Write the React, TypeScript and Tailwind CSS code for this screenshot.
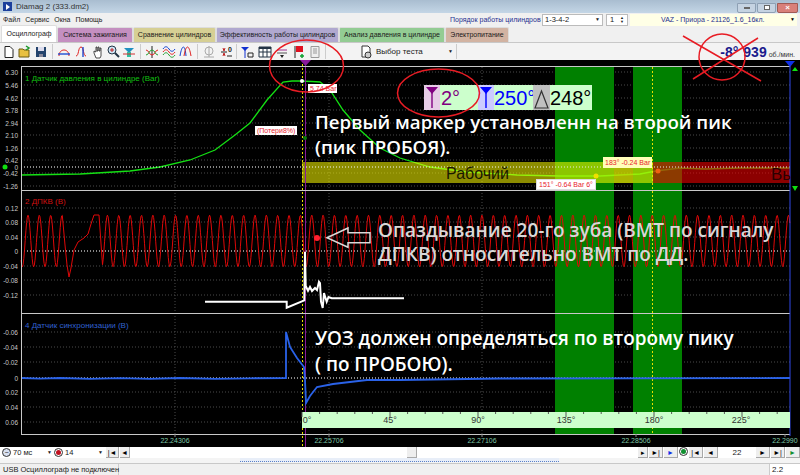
import { ReactNode } from "react";

const tabs = [
  { label: "Осциллограф", w: "w-[56px]", cls: "bg-white h-[17px] -mt-[1px]" },
  { label: "Система зажигания", w: "w-[76px]", cls: "bg-[#c48fc0]" },
  { label: "Сравнение цилиндров", w: "w-[83px]", cls: "bg-[#d6cf94]" },
  { label: "Эффективность работы цилиндров", w: "w-[123px]", cls: "bg-[#b0a8cf]" },
  { label: "Анализ давления в цилиндре", w: "w-[106px]", cls: "bg-[#93cc93]" },
  { label: "Электропитание", w: "w-[64px]", cls: "bg-[#d2b3a2]" },
];

function wave() {
  const pts: string[] = [];
  const zero = 241;
  const amp = 25.8;
  const curve = (from: number, to: number) => {
    for (let x = from; x <= to; x += 0.7) {
      const y = zero - amp * Math.cos(((x - 28) / 11.35) * Math.PI * 2);
      pts.push(`${x.toFixed(1)},${y.toFixed(1)}`);
    }
  };
  curve(21, 63);
  pts.push("65,245", "67,265", "69,277", "71,268", "74,250", "78,242", "84,238", "88,234", "91,224", "94,215", "99,215");
  curve(102.5, 790);
  return pts.join(" ");
}

const pressure =
  "21,175 80,174 130,171 160,167 190,160 215,150 235,135 250,123 267,100 283,82 292,81 300,81 312,81.5 320,82 330,90 343,110 360,130 380,148 400,158 430,167 467,172 517,175 560,176 600,176 640,174 656,171 680,168 705,169 740,168 790,168";
const sync =
  "21,378 40,378.6 60,378 90,378.8 120,378.2 150,378.8 180,378 215,378.8 250,378.3 286,378 286,332 290,347 297,358 304,367 305,380 306,403 310,396 317,387 333,384 367,380 400,380 500,378.5 790,378";
const drawn =
  "205,301.7 286.7,301.7 286.7,307.7 304.3,300.3 305,251.7 305.7,286 308,290.7 310,287 312,291 315,288 317,290 319,281.7 320,283 321,301.7 322.7,308 324,293 326.7,301.7 328.5,297 331.7,298.3 404,298.3";

const yLabels: [string, number][] = [
  ["6.30", 72], ["5.46", 85], ["4.62", 98], ["3.78", 110], ["2.94", 123], ["2.10", 135], ["1.26", 148], ["0.42", 160],
  ["0", 167], ["-0.42", 173], ["-1.26", 186],
  ["0.12", 208], ["0.08", 222], ["0.04", 237], ["0", 251], ["-0.04", 266], ["-0.08", 280], ["-0.12", 295],
  ["-0.06", 332], ["-0.04", 347], ["-0.02", 362], ["0", 378], ["0.02", 392], ["0.04", 407], ["0.06", 422],
];

const timeLabels: [string, number][] = [
  ["22.24306", 175], ["22.25706", 329], ["22.27106", 482], ["22.28506", 636], ["22.2990", 785],
];

const degrees: [string, number][] = [
  ["0°", 307], ["45°", 390], ["90°", 478], ["135°", 566], ["180°", 654], ["225°", 741],
];

function Icon({ x = 0, children }: { x?: number; children: ReactNode }) {
  return (
    <svg width="14" height="14" viewBox="0 0 14 14" fill="none" className="shrink-0" style={x ? { marginLeft: x } : undefined}>
      {children}
    </svg>
  );
}

function Bubble({ text, className }: { text: string; className: string }) {
  return (
    <div className={`absolute bg-white text-[7px] leading-[9px] text-[#e8212c] px-[2px] whitespace-nowrap ${className}`}>{text}</div>
  );
}

function NavBtn({ children, w = "w-[14px]" }: { children: ReactNode; w?: string }) {
  return (
    <div className={`${w} h-[11px] bg-[#eeeeee] border-b border-r border-[#a8a8a8] flex items-center justify-center text-[7px] leading-none text-black shrink-0`}>
      {children}
    </div>
  );
}

export default function App() {
  return (
    <div className="relative w-[800px] h-[475px] overflow-hidden bg-[#f0f0f0] font-['Liberation_Sans',sans-serif] text-[#1a1a1a]">
      {/* title bar */}
      <div className="h-[13px] bg-gradient-to-b from-[#a9bdd0] to-[#c4d6e6] flex items-center pl-[3px] pr-[2px]">
        <div className="w-[9px] h-[9px] bg-[#1c3f9c] flex items-center justify-center">
          <div className="w-0 h-0 border-y-[3px] border-y-transparent border-l-[4px] border-l-white" />
        </div>
        <span className="ml-[4px] text-[8px] text-[#333]">Diamag 2 (333.dm2)</span>
        <div className="ml-auto flex gap-[1px] -mb-[2px]">
          <div className="w-[19px] h-[10px] rounded-b-[2px] bg-[#c5d3e2] border border-[#8ea0b4] flex items-center justify-center">
            <div className="w-[6px] h-[2px] bg-white border border-[#666]" />
          </div>
          <div className="w-[19px] h-[10px] rounded-b-[2px] bg-[#c5d3e2] border border-[#8ea0b4] flex items-center justify-center">
            <div className="w-[6px] h-[5px] bg-white border border-[#666]" />
          </div>
          <div className="w-[21px] h-[10px] rounded-b-[2px] bg-[#d9807a] border border-[#a05a55] flex items-center justify-center text-white text-[8px] leading-none font-bold">
            ×
          </div>
        </div>
      </div>

      {/* menu */}
      <div className="h-[14px] flex items-center pl-[3px] text-[7px]">
        <div className="w-[447px] flex gap-[5px]">
          <span>Файл</span>
          <span>Сервис</span>
          <span>Окна</span>
          <span>Помощь</span>
        </div>
        <span className="w-[92px] text-[#1e2f8f] whitespace-nowrap">Порядок работы цилиндров</span>
        <div className="w-[61px] h-[12px] bg-white border border-[#bbb] flex items-center px-[2px] text-[7.5px]">
          1-3-4-2<span className="ml-auto text-[5px]">▼</span>
        </div>
        <div className="ml-[3px] w-[22px] h-[12px] bg-white border border-[#bbb] flex items-center px-[3px] text-[7.5px]">
          1<span className="ml-auto text-[4px] leading-[4px]">▲<br />▼</span>
        </div>
        <div className="ml-[2px] w-[167px] h-[12px] bg-[#ffffe6] flex items-center pl-[31px] pr-[2px] text-[#1e2f8f] whitespace-nowrap">
          VAZ - Приора - 21126_1.6_16кл.<span className="ml-auto text-[5px] text-black">▼</span>
        </div>
      </div>

      {/* tabs */}
      <div className="h-[16px] flex items-end pl-[1px] border-b border-[#c8c8c8] text-[7px]">
        {tabs.map((t) => (
          <div key={t.label} className={`${t.w} h-[15px] ${t.cls} rounded-t-[2px] border border-b-0 border-[#ddd] flex items-center justify-center whitespace-nowrap shrink-0`}>
            {t.label}
          </div>
        ))}
      </div>

      {/* toolbar */}
      <div className="h-[17px] bg-[#f3f3f3] flex items-center pl-[2px]">
        <Icon><path d="M3 1.5h5l3 3v8H3z" fill="#fff" stroke="#222" /></Icon>
        <Icon x={2}><path d="M1 4h4l1 1h5v7H1z" fill="#e8c040" stroke="#6a5a10" /><path d="M8 1l3 2-3 2" stroke="#1a9a2a" strokeWidth="1.5" /></Icon>
        <Icon x={2}><path d="M2 2h10v10H2z" fill="#24446c" /><path d="M4 2h6v4H4z" fill="#dde" /><path d="M5 9h4v3H5z" fill="#889" /></Icon>
        <div className="w-[1px] h-[15px] bg-[#ccc] ml-[4px]" />
        <Icon x={4}><path d="M2 11C2 3 12 3 12 11" stroke="#e02020" /><path d="M1 9h12" stroke="#1040d0" strokeWidth="1.3" /></Icon>
        <Icon x={3}><path d="M2 11c3 0 2-9 5-9s2 9 5 9" stroke="#e02020" /><path d="M9 2v10" stroke="#1040d0" strokeWidth="1.3" /></Icon>
        <Icon x={3}><path d="M5 13L3 8V6l2 1V2h1v4h1V2h1v4h1V3h1v8l-1 2z" fill="#fff" stroke="#222" strokeWidth=".8" /></Icon>
        <Icon x={1}><circle cx="6" cy="5" r="4" fill="#cfe6f6" stroke="#234" /><path d="M9 8l4 4" stroke="#234" strokeWidth="2" /><path d="M4 5h4M6 3v4" stroke="#c02020" /></Icon>
        <Icon x={2}><path d="M2 3h10L8 7H6z" fill="#2090c0" /><path d="M5 7h4v5H5z" fill="#30c0a0" /><path d="M1 9h12" stroke="#d03030" /></Icon>
        <div className="w-[1px] h-[15px] bg-[#ccc] ml-[4px]" />
        <Icon x={4}><path d="M7 1v12" stroke="#222" /><path d="M1 5c3 0 3 5 6 5s3-5 6-5" stroke="#e02020" /><path d="M1 10c3 0 3-5 6-5s3 5 6 5" stroke="#20a030" /></Icon>
        <Icon x={3}><path d="M1 4c2-3 4-3 6 0s4 3 6 0" stroke="#1040d0" /><path d="M1 7c2-3 4-3 6 0s4 3 6 0" stroke="#e02020" /><path d="M1 10c2-3 4-3 6 0s4 3 6 0" stroke="#20a030" /></Icon>
        <Icon x={3}><path d="M1 11c2-12 5-12 6 0" stroke="#1040d0" /><path d="M5 11c2-12 5-12 7 0" stroke="#e02020" /></Icon>
        <div className="w-[1px] h-[15px] bg-[#ccc] ml-[4px]" />
        <Icon x={4}><circle cx="7" cy="6" r="4" stroke="#aaa" /><path d="M7 1v11M2 12h10" stroke="#aaa" /></Icon>
        <Icon x={3}><path d="M4 3l1 3 1-3M4 11l1-3 1 3" stroke="#c02020" /><path d="M2 7h6" stroke="#222" /><path d="M8 11h5" stroke="#222" /></Icon>
        <span className="-ml-[5px] mb-[4px] text-[7px] font-bold leading-none">0</span>
        <div className="w-[1px] h-[15px] bg-[#ccc] ml-[4px]" />
        <Icon x={3}><path d="M1 2h8L5 6z" fill="#1030d0" /><path d="M5 5v8" stroke="#1030d0" /><path d="M8 8h5v4H8z" stroke="#222" /></Icon>
        <Icon x={4}><path d="M1 2h12v10H1z" fill="#fff" stroke="#234" /><path d="M1 2h12v2H1z" fill="#234" /><path d="M5 2v10M9 2v10M1 7h12" stroke="#234" /></Icon>
        <Icon x={3}><path d="M2 5h10" stroke="#a03090" /><path d="M2 8h10" stroke="#555" /><path d="M5 10h4l-2 3z" fill="#222" /></Icon>
        <Icon x={3}><path d="M3 1v12" stroke="#222" /><path d="M4 1h7v6H4z" fill="#e01020" /><path d="M10 9v4M8 11h4" stroke="#10a030" strokeWidth="1.5" /></Icon>
        <Icon x={2}><path d="M3 1.5h8v11H3z" fill="#eee" stroke="#999" /><path d="M5 4h4M5 6h4M5 8h4" stroke="#999" /></Icon>
        <div className="w-[1px] h-[15px] bg-[#ccc] ml-[3px]" />
        <Icon x={33}><path d="M3 1h6l2 2v9H3z" fill="#fff" stroke="#333" /><circle cx="9" cy="10" r="3" fill="#ccc" stroke="#333" /></Icon>
        <span className="ml-[3px] text-[8px] w-[77px] whitespace-nowrap flex items-center">
          Выбор теста<span className="ml-auto text-[5px]">▼</span>
        </span>
        <div className="w-[1px] h-[15px] bg-[#ccc] ml-[3px]" />
        <div className="ml-auto pr-[5px] flex items-baseline text-[#1a1a8c] font-bold text-[14px] leading-none">
          <span>-8°</span>
          <span className="ml-[5px]">939</span>
          <span className="ml-[2px] font-normal text-[7px] text-[#333]">об./мин.</span>
        </div>
      </div>

      {/* chart area */}
      <div className="relative h-[387px] bg-black">
        <svg width="800" height="387" viewBox="0 60 800 387" className="block font-['Liberation_Sans',sans-serif]">
          {yLabels.map(([, y], i) => (
            <line key={i} x1="21" x2="790" y1={y} y2={y} stroke="#4a4a4a" strokeDasharray="1 2" />
          ))}
          {timeLabels.slice(0, 4).map(([, x]) => (
            <line key={x} x1={x} x2={x} y1="67" y2="434" stroke="#4a4a4a" strokeDasharray="1 2" />
          ))}
          <rect x="555" y="67" width="59" height="367" fill="#008000" />
          <rect x="633" y="67" width="49" height="367" fill="#008000" />
          <polyline points={pressure} fill="none" stroke="#14e014" strokeWidth="1.3" />
          <rect x="302" y="162" width="351" height="21" fill="#ffff00" fillOpacity=".55" />
          <rect x="614" y="162" width="19" height="21" fill="#c0d000" fillOpacity=".6" />
          <rect x="653" y="162" width="137" height="21" fill="#ff0000" fillOpacity=".55" />
          {[167, 251, 378].map((y) => (
            <line key={y} x1="21" x2="790" y1={y} y2={y} stroke="#e8e8e8" strokeDasharray="1 2" />
          ))}

          <line x1="302.5" x2="302.5" y1="60" y2="447" stroke="#e8e000" strokeDasharray="2 2" />
          <line x1="305.5" x2="305.5" y1="62" y2="447" stroke="#8a1a9a" />
          <line x1="652.5" x2="652.5" y1="67" y2="434" stroke="#e8e000" strokeDasharray="2 2" />

          <polyline points={wave()} fill="none" stroke="#e00808" strokeWidth="1" strokeLinejoin="round" />
          <polyline points={sync} fill="none" stroke="#2a62e8" strokeWidth="1.8" />
          <polyline points={drawn} fill="none" stroke="#ffffff" strokeWidth="2" />

          <polygon points="327,237.7 348,228 348,232.7 370,232.7 370,242.7 348,242.7 348,247.3" fill="none" stroke="#d8d8d8" strokeWidth="1.5" />

          <line x1="21" x2="790" y1="66.5" y2="66.5" stroke="#c8c8c8" />
          <line x1="21" x2="790" y1="190.5" y2="190.5" stroke="#c8c8c8" />
          <line x1="21" x2="790" y1="313.5" y2="313.5" stroke="#c8c8c8" />
          <line x1="21" x2="790" y1="434.5" y2="434.5" stroke="#c8c8c8" />
          <line x1="21.5" x2="21.5" y1="66" y2="435" stroke="#c8c8c8" />
          <line x1="790" x2="790" y1="62" y2="436" stroke="#3048e8" strokeWidth="1" />

          <rect x="302" y="412" width="488" height="16" fill="#ccffcc" />
          {Array.from({ length: 28 }, (_, i) => (
            <line key={i} x1={302 + i * 17.6} x2={302 + i * 17.6} y1="412" y2={i % 5 === 0 ? 417 : 414} stroke="#555" />
          ))}
          {degrees.map(([t, x]) => (
            <text key={t} x={x} y="423" textAnchor="middle" fontSize="9" fill="#333">{t}</text>
          ))}

          {yLabels.map(([t, y], i) => (
            <text key={i} x="18" y={y + 2.5} textAnchor="end" fontSize="6.5" fill="#c8c8c8">{t}</text>
          ))}
          {timeLabels.map(([t, x]) => (
            <g key={x}>
              <line x1={x} x2={x} y1="434" y2="437" stroke="#888" />
              <text x={x} y="443" textAnchor="middle" fontSize="7" fill="#7fc8a8">{t}</text>
            </g>
          ))}
          <text x="25" y="81" fontSize="8" fill="#12c012">1 Датчик давления в цилиндре (Bar)</text>
          <text x="25" y="204" fontSize="8" fill="#d01010">2 ДПКВ (В)</text>
          <text x="25" y="328" fontSize="8" fill="#3060d0">4 Датчик синхронизации (В)</text>
          <text x="446" y="179" fontSize="16" fill="#1a1a00">Рабочий</text>
          <text x="771" y="180" fontSize="17" fill="#2a0000">Вь</text>

          <polygon points="300,60 311,60 305.5,66" fill="#8a1a9a" />
          <polygon points="785,61 795,61 790,67" fill="#1030e8" />
          <polygon points="792,71 798,71 795,67" fill="#10e010" />
          <polygon points="792,186 798,186 795,191" fill="#10e010" />
          <circle cx="5" cy="167" r="2.5" fill="#10e010" />
          <circle cx="302" cy="81" r="2" fill="#ffffff" />
          <circle cx="305" cy="138" r="2" fill="#0a7a0a" />
          <circle cx="317" cy="238" r="3" fill="#ff2030" />
          <circle cx="596" cy="176" r="2.5" fill="#f0e000" />
          <circle cx="658" cy="171" r="2.5" fill="#f06010" />
        </svg>

        <Bubble text="5.74 Bar" className="left-[308px] top-[24px] w-[29px]" />
        <Bubble text="(Потери8%)" className="left-[255px] top-[66px]" />
        <Bubble text="151° -0.64 Bar 6°" className="left-[536px] top-[119px] border border-[#ddd]" />
        <div className="absolute left-[603px] top-[97px] w-[49px] h-[11px] bg-[#ffffb8] text-[7px] leading-[11px] text-[#e8212c] px-[2px] whitespace-nowrap">
          183° -0.24 Bar
        </div>

        <div className="absolute left-[424px] top-[25px] h-[25px] flex items-center bg-[#ccffcc] text-[20px] leading-none">
          <div className="w-[16px] h-full bg-[#e6cce6] flex justify-center">
            <svg width="14" height="25" viewBox="0 0 14 25"><path d="M1 2h12L7 9z" fill="#800080" /><path d="M7 8v15" stroke="#800080" strokeWidth="1.4" /></svg>
          </div>
          <span className="w-[38px] pl-[1px] text-[#800080]">2°</span>
          <div className="w-[16px] h-full bg-[#ccccff] flex justify-center">
            <svg width="14" height="25" viewBox="0 0 14 25"><path d="M1 2h12L7 9z" fill="#0000ff" /><path d="M7 8v15" stroke="#0000ff" strokeWidth="1.4" /></svg>
          </div>
          <span className="w-[39px] whitespace-nowrap text-[#0000ff]">250°</span>
          <div className="relative w-[17px] h-full bg-[#c0c0c0] flex justify-center">
            <svg width="15" height="25" viewBox="0 0 15 25"><path d="M7.5 6L14 23H1z" fill="none" stroke="#333" strokeWidth="1.2" /></svg>
          </div>
          <span className="pr-[1px] text-black">248°</span>
        </div>

        <div className="absolute left-[315px] top-[49px] text-white font-['Open_Sans',sans-serif] font-semibold text-[18.7px] leading-[25px] whitespace-nowrap">
          Первый маркер установленн на второй пик
          <br />
          (пик ПРОБОЯ).
        </div>
        <div className="absolute left-[378px] top-[158px] text-[#d8d8d8] font-['Open_Sans',sans-serif] font-semibold text-[19px] leading-[24px] whitespace-nowrap">
          Опаздывание 20-го зуба (ВМТ по сигналу
          <br />
          ДПКВ) относительно ВМТ по ДД.
        </div>
        <div className="absolute left-[315px] top-[265px] text-white font-['Open_Sans',sans-serif] font-semibold text-[18.9px] leading-[26px] whitespace-nowrap">
          УОЗ должен определяться по второму пику
          <br />
          ( по ПРОБОЮ).
        </div>
      </div>

      {/* bottom controls */}
      <div className="h-[11px] bg-white flex items-center text-[7.5px]">
        <div className="ml-[2px] w-[9px] h-[9px] rounded-full border border-[#333] bg-[#d8e0f0] flex items-center justify-center text-[7px] leading-none">−</div>
        <div className="ml-[2px] w-[39px] flex items-center">70 мс<span className="ml-auto text-[5px]">▼</span></div>
        <div className="ml-[2px] w-[9px] h-[9px] rounded-full border border-[#333] flex items-center justify-center">
          <div className="w-[5px] h-[5px] rounded-full bg-[#c01020]" />
        </div>
        <div className="ml-[2px] w-[38px] flex items-center">14<span className="ml-auto text-[5px]">▼</span></div>
        <div className="ml-[3px] flex gap-[1px]">
          <NavBtn w="w-[13px]">|◄</NavBtn>
          <NavBtn w="w-[10px]">◄</NavBtn>
        </div>
        <div className="ml-[277px] w-[10px] h-[11px] bg-[#eeeeee] border-r border-b border-[#aaa] shrink-0" />
        <div className="ml-[221px] flex gap-[1px]">
          <NavBtn w="w-[10px]">▸</NavBtn>
          <NavBtn>►|</NavBtn>
          <NavBtn><span className="text-[#1030e8]">►</span></NavBtn>
          <div className="w-[9px] h-[9px] rounded-full border border-[#333] flex items-center justify-center shrink-0">
            <div className="w-[5px] h-[5px] rounded-full bg-[#109030]" />
          </div>
          <NavBtn>|◄</NavBtn>
          <NavBtn>◄</NavBtn>
          <span className="w-[36px] text-center text-[8px] leading-[11px]">22</span>
          <NavBtn>►</NavBtn>
          <NavBtn>►|</NavBtn>
          <NavBtn><span className="text-[#109030]">►</span></NavBtn>
        </div>
      </div>
      <div className="h-[6px] bg-[#f4f4f4] border-b border-[#c8c8c8] pl-[240px]">
        <div className="w-[319px] h-[4px] border-b border-dotted border-[#5a80c8] bg-[#e8eef8]" />
      </div>

      {/* status bar */}
      <div className="h-[11px] flex text-[7.5px] leading-[11px]">
        <div className="w-[119px] pl-[3px] border-r border-[#ccc] whitespace-nowrap">USB Осциллограф не подключен</div>
        <div className="ml-auto w-[31px] pl-[2px] bg-white border-l border-[#ccc] text-[8px]">2.2</div>
      </div>

      {/* red hand-drawn marks */}
      <svg width="800" height="475" viewBox="0 0 800 475" fill="none" stroke="#e81c24" strokeWidth="1.5" className="absolute left-0 top-0 pointer-events-none">
        <ellipse cx="306.5" cy="66" rx="37" ry="26" />
        <ellipse cx="438.5" cy="93" rx="41" ry="24" />
        <circle cx="722" cy="57" r="23" />
        <path d="M683 36L761 81M758 38L693 79" />
      </svg>
    </div>
  );
}
